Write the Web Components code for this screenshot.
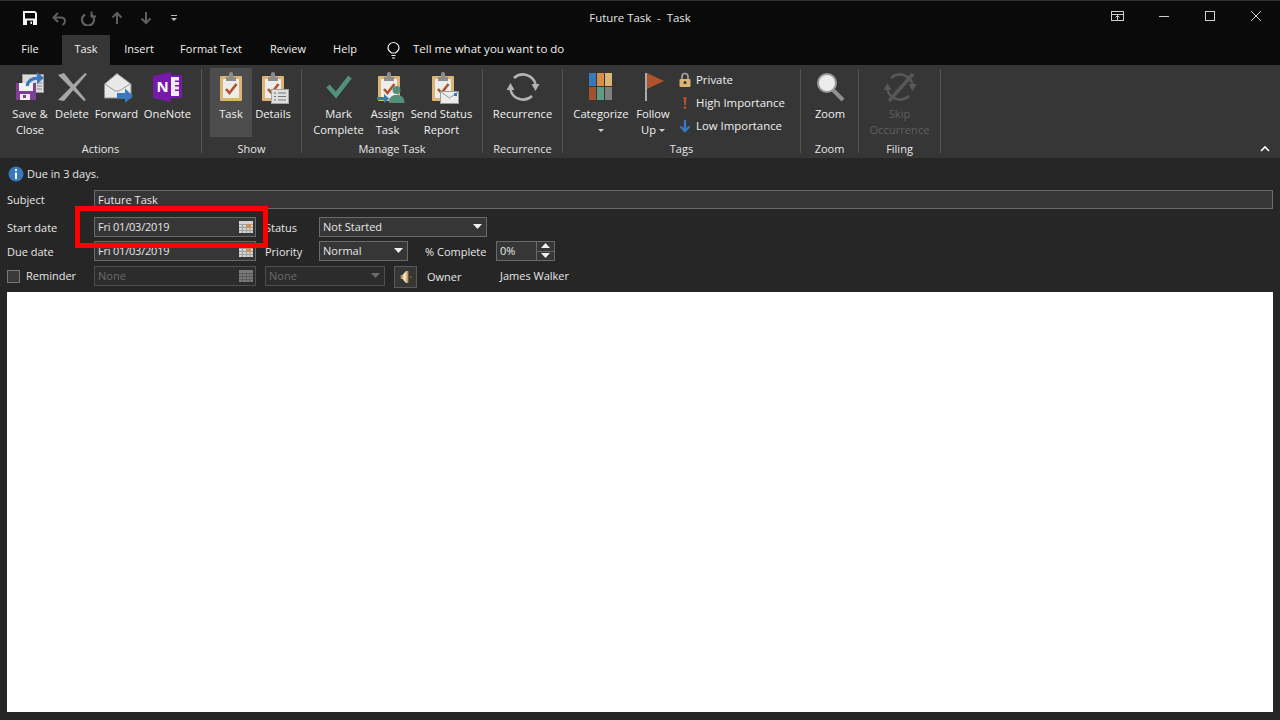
<!DOCTYPE html>
<html>
<head>
<meta charset="utf-8">
<title>Future Task - Task</title>
<style>
    html, body { margin: 0; padding: 0; background: #262626; }
    body { width: 1280px; height: 720px; overflow: hidden; font: 11px/16px "Open Sans", "Noto Sans", sans-serif; color: #e6e6e6; }
</style>
</head>
<body>
<task-window>
    <title-bar>Future Task&nbsp; -&nbsp; Task</title-bar>
    <tab-strip></tab-strip>
    <ribbon-bar>
        <ribbon-group label="Actions" style="width:202px;padding-left:8px">
            <ribbon-button icon="save" style="width:44px">Save &amp;<br>Close</ribbon-button>
            <ribbon-button icon="delete" style="width:40px">Delete</ribbon-button>
            <ribbon-button icon="forward" style="width:49px">Forward</ribbon-button>
            <ribbon-button icon="onenote" style="width:53px">OneNote</ribbon-button>
        </ribbon-group>
        <ribbon-group label="Show" style="width:100px;padding-left:8px">
            <ribbon-button icon="task" active style="width:42px">Task</ribbon-button>
            <ribbon-button icon="details" style="width:42px">Details</ribbon-button>
        </ribbon-group>
        <ribbon-group label="Manage Task" style="width:181px;padding-left:9px">
            <ribbon-button icon="mark" style="width:55px">Mark<br>Complete</ribbon-button>
            <ribbon-button icon="assign" style="width:43px">Assign<br>Task</ribbon-button>
            <ribbon-button icon="send" style="width:65px">Send Status<br>Report</ribbon-button>
        </ribbon-group>
        <ribbon-group label="Recurrence" style="width:80px;padding-left:7px">
            <ribbon-button icon="recurrence" style="width:65px">Recurrence</ribbon-button>
        </ribbon-group>
        <ribbon-group label="Tags" style="width:238px;padding-left:8px">
            <ribbon-button icon="categorize" style="width:60px">Categorize<br><drop-caret></drop-caret></ribbon-button>
            <ribbon-button icon="follow" style="width:44px">Follow<br>Up <drop-caret></drop-caret></ribbon-button>
            <tag-list>
                <tag-row icon="lock">Private</tag-row>
                <tag-row icon="high">High Importance</tag-row>
                <tag-row icon="low">Low Importance</tag-row>
            </tag-list>
        </ribbon-group>
        <ribbon-group label="Zoom" style="width:58px;padding-left:7px">
            <ribbon-button icon="zoom" style="width:44px">Zoom</ribbon-button>
        </ribbon-group>
        <ribbon-group label="Filing" style="width:82px;padding-left:7px">
            <ribbon-button icon="skip" disabled style="width:67px">Skip<br>Occurrence</ribbon-button>
        </ribbon-group>
    </ribbon-bar>
    <task-form>
        <form-field slot="subject" style="flex:1">Future Task</form-field>

        <form-field slot="start" calendar style="width:162px;letter-spacing:-.2px">Fri 01/03/2019</form-field>
        <form-select slot="status" style="width:168px">Not Started</form-select>

        <form-field slot="due" calendar style="width:162px;letter-spacing:-.2px">Fri 01/03/2019</form-field>
        <form-select slot="priority" style="width:89px">Normal</form-select>
        <spin-field slot="percent">0%</spin-field>

        <form-field slot="reminder" calendar disabled style="width:162px">None</form-field>
        <form-select slot="remindertime" disabled style="width:120px">None</form-select>
    </task-form>
    <note-body></note-body>
    <callout-box></callout-box>
</task-window>

<script>
const TOOL_ICONS = {
    // quick access toolbar, 16x16
    qsave: `<path d="M1 1h12l2 2v12H1z" fill="#f6f6f6"/><path d="M3 3h10v5.500H3z" fill="#0a0a0a"/><path d="M5 10.500h6V15H5z" fill="#0a0a0a"/><path d="M8.500 11.500H10v2.500H8.500z" fill="#f6f6f6"/>`,
    undo: `<path d="M7 3L2.500 7.500 7 12M3 7.500h7c3 0 4 2 4 3.500 0 2-1 3-2.500 4" fill="none" stroke="#5f5f5f" stroke-width="2"/>`,
    redo: `<path d="M5 4.500A6 6 0 1 0 11 4.500" fill="none" stroke="#5f5f5f" stroke-width="2.200"/><path d="M11.500 1.500v5h4.500" fill="none" stroke="#5f5f5f" stroke-width="2"/>`,
    up: `<path d="M8 14V3M3.500 7.500 8 3l4.500 4.500" fill="none" stroke="#5f5f5f" stroke-width="2"/>`,
    down: `<path d="M8 2v11M3.500 8.500 8 13l4.500-4.500" fill="none" stroke="#5f5f5f" stroke-width="2"/>`,
    custom: `<path d="M5 5h6v1H5z" fill="#b8b8b8"/><path d="M5 8h6l-3 3z" fill="#b8b8b8"/>`,
};

const clipboard = (x) => `
    <rect x="${x}" y="5" width="22" height="25" rx="1" fill="#dcb574"/>
    <rect x="${x + 3}" y="8" width="16" height="19" fill="#ececec"/>
    <path d="M${x + 6} 6h3v-3a2 2 0 0 1 4 0v3h3v4h-10z" fill="#8c8c8c"/>
    <path d="M${x + 6} 18l3.500 4 7-9" fill="none" stroke="#b0532a" stroke-width="2.600"/>`;

const cycle = (c) => `
    <path d="M8 7A13 13 0 0 1 29.500 13M26 25A13 13 0 0 1 4.500 19" fill="none" stroke="${c}" stroke-width="2.600"/>
    <path d="M25.500 13h8l-4 7zM.5 19h8l-4-7z" fill="${c}"/>`;

const RIBBON_ICONS = {
    save: `<rect x="9.500" y="3.500" width="21" height="18" fill="#dcdcdc" stroke="#9a9a9a"/>
        <path d="M24 12h5M24 15h5M24 18h5" stroke="#8a8a8a"/>
        <path d="M3 12h20v17H3z" fill="#7f3f98"/><path d="M6 12h14v8H6z" fill="#f2f2f2"/><path d="M7 23h10v6H7z" fill="#f2f2f2"/><path d="M10 24h3v3h-3z" fill="#7f3f98"/>
        <path d="M14 15c1-6 6-8 12-8" fill="none" stroke="#3a78bd" stroke-width="3.200"/><path d="M24 1l7 6-7 6z" fill="#3a78bd"/>`,
    delete: `<path d="M3 4l6-2 22 27-2 1z" fill="#a6a6a6"/><path d="M30 2l2 1L9 30l-6-1z" fill="#a6a6a6"/>`,
    forward: `<path d="M4.500 13L17 2.500 31 13v14H4.500z" fill="#e8e8e8" stroke="#8f8f8f"/><path d="M5 13l10 7h4l11-7" fill="none" stroke="#9a9a9a"/>
        <path d="M17 22h8v-4.500l8 7.500-8 7v-4.500h-8z" fill="#3a78bd"/>`,
    onenote: `<path d="M19 4h12v23H19z" fill="#7719aa"/><path d="M20 6h8v19h-8z" fill="#f2eaf6"/><path d="M24 9.500h7v1.500h-7zM24 14h7v1.500h-7zM24 18.500h7v1.500h-7z" fill="#7719aa"/>
        <path d="M2 5l18-4v30L2 27z" fill="#7719aa"/><text x="5.500" y="21" font-family="Open Sans" font-size="15" font-weight="700" fill="#fff">N</text>`,
    task: clipboard(6),
    details: clipboard(6) + `<rect x="15.500" y="18.500" width="17" height="14" fill="#dedede" stroke="#a3a3a3"/><path d="M18 22h2M22 22h8M18 25.500h2M22 25.500h8M18 29h2M22 29h8" stroke="#777"/>`,
    mark: `<path d="M6 15l8 9L28 6" fill="none" stroke="#52907c" stroke-width="4.500"/>`,
    assign: clipboard(7) + `<circle cx="25.500" cy="19" r="4" fill="#52907c"/><path d="M18 32c0-6 3-8 7.500-8s8 2 8 8z" fill="#52907c"/>
        <path d="M6 26h7v-3l5 4.500-5 4.500v-3H6z" fill="#3a78bd"/>`,
    send: clipboard(7) + `<rect x="15.500" y="20.500" width="18" height="12" fill="#ececec" stroke="#9a9a9a"/><path d="M16 21l8.500 6 8.500-6" fill="none" stroke="#9a9a9a"/><path d="M29 22h3v3h-3z" fill="#3a78bd"/>`,
    recurrence: cycle("#b3b3b3"),
    categorize: `<path d="M5 2h7v13H5z" fill="#3a78bd"/><path d="M13 2h7v13h-7z" fill="#d68d46"/><path d="M21 2h7v13h-7z" fill="#dcb574"/>
        <path d="M5 16h7v13H5z" fill="#a0522d"/><path d="M13 16h7v13h-7z" fill="#5e9a84"/><path d="M21 16h7v13h-7z" fill="#7f7f7f"/>`,
    follow: `<path d="M9 2h2v28H9z" fill="#a4abb3"/><path d="M11 2l17 8-17 8z" fill="#b0532a"/>`,
    zoom: `<path d="M20 19l10 10" stroke="#8f8f8f" stroke-width="4"/><circle cx="14" cy="12" r="9" fill="#ececec" stroke="#9a9a9a" stroke-width="2"/>`,
    skip: cycle("#575757") + `<path d="M6 30L30 3" stroke="#575757" stroke-width="3.500"/>`,
};

const TAG_ICONS = {
    lock: `<path d="M5 7V4.500a3 3 0 0 1 6 0V7" fill="none" stroke="#a6a6a6" stroke-width="1.600"/><rect x="2.500" y="7" width="11" height="8" rx="1" fill="#dcb574"/><circle cx="8" cy="10.500" r="1.500" fill="#333"/>`,
    high: `<path d="M6.500 2h3l-.6 8H7.100z" fill="#b0532a"/><rect x="6.800" y="11.500" width="2.400" height="2.500" fill="#b0532a"/>`,
    low: `<path d="M8 2v10M3.500 8.500 8 13l4.500-4.500" fill="none" stroke="#3a78bd" stroke-width="2.400"/>`,
};

const titleBarTemplate = document.createElement("template");
titleBarTemplate.innerHTML = `
    <style>
        :host { display: flex; align-items: center; height: 34px; background: #0a0a0a; border-top: 1px solid #333; position: relative; }
        .quick { display: flex; width: 190px; padding-left: 15px; box-sizing: border-box; }
        .quick span { width: 29px; height: 16px; display: flex; justify-content: center; }
        svg { display: block; }
        .title { flex: 1; text-align: center; color: #e6e6e6; margin-right: 190px; font-size: 11.400px; }
        .win { display: flex; }
        .win span { width: 46px; display: flex; justify-content: center; }
        .win path, .win rect { fill: none; stroke: #cfcfcf; }
    </style>
    <div class="quick">
        <span><svg width="16" height="16">${TOOL_ICONS.qsave}</svg></span>
        <span><svg width="16" height="16">${TOOL_ICONS.undo}</svg></span>
        <span><svg width="16" height="16">${TOOL_ICONS.redo}</svg></span>
        <span><svg width="16" height="16">${TOOL_ICONS.up}</svg></span>
        <span><svg width="16" height="16">${TOOL_ICONS.down}</svg></span>
        <span style="width:27px"><svg width="16" height="16">${TOOL_ICONS.custom}</svg></span>
    </div>
    <div class="title"><slot></slot></div>
    <div class="win" style="position:absolute;right:1px;top:8px">
        <span><svg width="14" height="14"><rect x=".5" y="2.500" width="12" height="9"/><path d="M1 5.500h11M6.500 11V6.500M4.500 8.500l2-2 2 2"/></svg></span>
        <span><svg width="14" height="14"><path d="M2 7.500h10"/></svg></span>
        <span><svg width="14" height="14"><rect x="2.500" y="2.500" width="9" height="9"/></svg></span>
        <span><svg width="14" height="14"><path d="M2 2l10 10M12 2L2 12"/></svg></span>
    </div>
`;
class TitleBar extends HTMLElement {
    constructor() {
        super();
        this.attachShadow({ mode: "open" });
        this.shadowRoot.appendChild(titleBarTemplate.content.cloneNode(true));
    }
}
customElements.define("title-bar", TitleBar);

const tabStripTemplate = document.createElement("template");
tabStripTemplate.innerHTML = `
    <style>
        :host { display: flex; height: 30px; background: #0a0a0a; padding-left: 3px; color: #f0f0f0; }
        div { display: flex; align-items: center; justify-content: center; height: 30px; padding-bottom: 2px; box-sizing: border-box; }
        .on { background: #363636; }
        .tell { margin-left: 18px; justify-content: flex-start; gap: 12px; font-size: 11.500px; }
        svg { display: block; margin-top: 1px; }
    </style>
    <div style="width:54px">File</div>
    <div class="on" style="width:48px;margin-left:5px">Task</div>
    <div style="width:58px">Insert</div>
    <div style="width:86px">Format Text</div>
    <div style="width:68px">Review</div>
    <div style="width:46px">Help</div>
    <div class="tell">
        <svg width="15" height="18"><path d="M5.500 12C3.500 10.500 2 9 2 7a5.500 5.500 0 0 1 11 0c0 2-1.500 3.500-3.500 5z M5.500 14.500h4M6 17h3" fill="none" stroke="#f0f0f0" stroke-width="1.200"/></svg>
        <span>Tell me what you want to do</span>
    </div>
`;
class TabStrip extends HTMLElement {
    constructor() {
        super();
        this.attachShadow({ mode: "open" });
        this.shadowRoot.appendChild(tabStripTemplate.content.cloneNode(true));
    }
}
customElements.define("tab-strip", TabStrip);

const ribbonBarTemplate = document.createElement("template");
ribbonBarTemplate.innerHTML = `
    <style>
        :host { display: flex; height: 93px; box-sizing: border-box; padding: 4px 0 5px; background: #363636; }
        svg { margin: auto 10px 0 auto; display: block; }
    </style>
    <slot></slot>
    <svg width="10" height="8"><path d="M1 6l4-4 4 4" fill="none" stroke="#fff" stroke-width="1.600"/></svg>
`;
class RibbonBar extends HTMLElement {
    constructor() {
        super();
        this.attachShadow({ mode: "open" });
        this.shadowRoot.appendChild(ribbonBarTemplate.content.cloneNode(true));
    }
}
customElements.define("ribbon-bar", RibbonBar);

const ribbonGroupTemplate = document.createElement("template");
ribbonGroupTemplate.innerHTML = `
    <style>
        :host { display: flex; flex-direction: column; box-sizing: border-box; height: 84px; border-right: 1px solid #555; position: relative; }
        .items { display: flex; height: 69px; margin-top: -1px; }
        .label { position: absolute; left: 0; right: 0; bottom: -4px; text-align: center; color: #e6e6e6; }
    </style>
    <div class="items"><slot></slot></div>
    <div class="label"></div>
`;
class RibbonGroup extends HTMLElement {
    constructor() {
        super();
        this.attachShadow({ mode: "open" });
        this.shadowRoot.appendChild(ribbonGroupTemplate.content.cloneNode(true));
        this.shadowRoot.querySelector(".label").textContent = this.getAttribute("label");
    }
}
customElements.define("ribbon-group", RibbonGroup);

const ribbonButtonTemplate = document.createElement("template");
ribbonButtonTemplate.innerHTML = `
    <style>
        :host { display: block; flex: none; height: 69px; text-align: center; white-space: nowrap; color: #f0f0f0; font-size: 11.200px; }
        :host([active]) { background: #4d4d4d; }
        :host([disabled]) { color: #5f5f5f; }
        svg { display: block; margin: 3px auto 0; }
        .text { margin-top: 1px; display: flex; flex-direction: column; align-items: center; }
    </style>
    <svg width="34" height="34" viewBox="0 0 34 34"></svg>
    <div class="text"><div><slot></slot></div></div>
`;
class RibbonButton extends HTMLElement {
    constructor() {
        super();
        this.attachShadow({ mode: "open" });
        this.shadowRoot.appendChild(ribbonButtonTemplate.content.cloneNode(true));
        this.shadowRoot.querySelector("svg").innerHTML = RIBBON_ICONS[this.getAttribute("icon")];
    }
}
customElements.define("ribbon-button", RibbonButton);

class DropCaret extends HTMLElement {
    constructor() {
        super();
        this.attachShadow({ mode: "open" }).innerHTML = `
            <style>
                :host { display: inline-block; width: 0; height: 0; border: 3px solid transparent; border-top: 3px solid #d0d0d0; border-bottom: 0; vertical-align: 2px; }
            </style>`;
    }
}
customElements.define("drop-caret", DropCaret);

class TagList extends HTMLElement {
    constructor() {
        super();
        this.attachShadow({ mode: "open" }).innerHTML = `
            <style>
                :host { display: flex; flex-direction: column; }
            </style>
            <slot></slot>`;
    }
}
customElements.define("tag-list", TagList);

class TagRow extends HTMLElement {
    constructor() {
        super();
        this.attachShadow({ mode: "open" }).innerHTML = `
            <style>
                :host { display: flex; align-items: center; gap: 3px; height: 23px; padding-left: 2px; color: #f0f0f0; white-space: nowrap; font-size: 11.400px; }
                svg { display: block; }
            </style>
            <svg width="16" height="16">${TAG_ICONS[this.getAttribute("icon")]}</svg>
            <span><slot></slot></span>`;
    }
}
customElements.define("tag-row", TagRow);

const formTemplate = document.createElement("template");
formTemplate.innerHTML = `
    <style>
        :host { display: block; height: 134px; box-sizing: border-box; background: #262626; padding: 0 7px; color: #e6e6e6; }
        .info { display: flex; align-items: center; gap: 3px; height: 32px; padding: 0 1px 1px; box-sizing: border-box; }
        .row { display: flex; align-items: center; }
        .lab { width: 87px; flex: none; padding-top: 1px; }
        .lab2 { width: 54px; flex: none; box-sizing: border-box; padding-top: 1px; margin-left: 9px; }
        .check { display: flex; align-items: center; gap: 6px; padding-top: 0; }
        .check i { display: block; width: 11px; height: 11px; border: 1px solid #777; background: #3a3a3a; }
        svg { display: block; }
        .sound { width: 23px; height: 22px; box-sizing: border-box; border: 1px solid #5a5a5a; margin: 2px 0 0 9px; display: flex; align-items: center; justify-content: center; background: #363636; }
    </style>
    <div class="info">
        <svg width="16" height="16"><circle cx="8" cy="8" r="7.500" fill="#3a78bd"/><path d="M7 3h2v2H7zM7 6.500h2V13H7z" fill="#fff"/></svg>
        <span>Due in 3 days.</span>
    </div>
    <div class="row" style="height:19px"><div class="lab">Subject</div><slot name="subject"></slot></div>
    <div class="row" style="height:20px;margin-top:8px"><div class="lab">Start date</div><slot name="start"></slot><div class="lab2">Status</div><slot name="status"></slot></div>
    <div class="row" style="height:20px;margin-top:4px"><div class="lab">Due date</div><slot name="due"></slot><div class="lab2">Priority</div><slot name="priority"></slot>
        <div style="width:71px;margin-left:17px;padding-top:1px;flex:none">% Complete</div><slot name="percent"></slot></div>
    <div class="row" style="height:20px;margin-top:5px">
        <div class="lab check"><i></i>Reminder</div><slot name="reminder"></slot>
        <div style="width:9px;flex:none"></div><slot name="remindertime"></slot>
        <div class="sound"><svg width="16" height="16">
            <defs><linearGradient id="spk" x1="0" x2="1"><stop offset="0" stop-color="#a8682f"/><stop offset=".5" stop-color="#fbf1dc"/><stop offset="1" stop-color="#b9762f"/></linearGradient></defs>
            <path d="M2.500 6h2l3.500-4h2.500v12H8L4.500 10h-2z" fill="url(#spk)"/><path d="M12 8h2" stroke="#777"/></svg></div>
        <div style="margin:2px 0 0 10px;width:73px;flex:none">Owner</div>
        <div style="flex:none">James Walker</div>
    </div>
`;
class TaskForm extends HTMLElement {
    constructor() {
        super();
        this.attachShadow({ mode: "open" });
        this.shadowRoot.appendChild(formTemplate.content.cloneNode(true));
    }
}
customElements.define("task-form", TaskForm);

const fieldStyle = `
    :host { display: flex; flex: none; align-items: center; height: 100%; box-sizing: border-box; background: #363636; border: 1px solid #6a6a6a; color: #e6e6e6; padding-left: 3px; overflow: hidden; white-space: nowrap; }
    :host([disabled]) { background: #2c2c2c; border-color: #4f4f4f; color: #6b6b6b; }
    .v { flex: 1; }
    svg { display: block; flex: none; }
`;

class FormField extends HTMLElement {
    constructor() {
        super();
        const off = this.hasAttribute("disabled");
        const cal = !this.hasAttribute("calendar") ? "" : `
            <svg width="14" height="12" style="margin-right:2px">
                <rect width="14" height="12" fill="${off ? "#7a7a7a" : "#d4d4d4"}"/>
                <path d="M0 3.500h14M0 6.500h14M0 9.500h14M3.500 3v9M7.500 3v9M11 3v9" stroke="${off ? "#5c5c5c" : "#a0a0a0"}"/>
                ${off ? "" : `<rect x="8" y="3" width="4" height="4" fill="#d68d46"/>`}
            </svg>`;
        this.attachShadow({ mode: "open" }).innerHTML = `<style>${fieldStyle}</style><div class="v"><slot></slot></div>${cal}`;
    }
}
customElements.define("form-field", FormField);

class FormSelect extends HTMLElement {
    constructor() {
        super();
        const c = this.hasAttribute("disabled") ? "#6b6b6b" : "#f0f0f0";
        this.attachShadow({ mode: "open" }).innerHTML = `<style>${fieldStyle}</style><div class="v"><slot></slot></div>
            <svg width="10" height="6" style="margin-right:3px"><path d="M0 0h9L4.500 5z" fill="${c}"/></svg>`;
    }
}
customElements.define("form-select", FormSelect);

class SpinField extends HTMLElement {
    constructor() {
        super();
        this.attachShadow({ mode: "open" }).innerHTML = `
            <style>
                ${fieldStyle}
                :host { width: 59px; padding: 0 0 0 3px; }
                .b { width: 17px; height: 100%; border-left: 1px solid #6a6a6a; display: flex; flex-direction: column; flex: none; }
                .b span { flex: 1; display: flex; align-items: center; justify-content: center; }
                .b span + span { border-top: 1px solid #6a6a6a; }
            </style>
            <div class="v"><slot></slot></div>
            <div class="b">
                <span><svg width="10" height="6"><path d="M0 5h9L4.500 0z" fill="#f0f0f0"/></svg></span>
                <span><svg width="10" height="6"><path d="M0 0h9L4.500 5z" fill="#f0f0f0"/></svg></span>
            </div>`;
    }
}
customElements.define("spin-field", SpinField);

class NoteBody extends HTMLElement {
    constructor() {
        super();
        this.attachShadow({ mode: "open" }).innerHTML = `
            <style>
                :host { display: block; height: 420px; margin: 0 7px; background: #fff; }
            </style>`;
    }
}
customElements.define("note-body", NoteBody);

class CalloutBox extends HTMLElement {
    constructor() {
        super();
        this.attachShadow({ mode: "open" }).innerHTML = `
            <style>
                :host { position: absolute; left: 75px; top: 206px; width: 193px; height: 42px; box-sizing: border-box; border: 5px solid #f00; }
            </style>`;
    }
}
customElements.define("callout-box", CalloutBox);

class TaskWindow extends HTMLElement {
    constructor() {
        super();
        this.attachShadow({ mode: "open" }).innerHTML = `
            <style>
                :host { display: block; position: relative; width: 1280px; height: 720px; background: #262626; overflow: hidden; }
            </style>
            <slot></slot>`;
    }
}
customElements.define("task-window", TaskWindow);
</script>
</body>
</html>
